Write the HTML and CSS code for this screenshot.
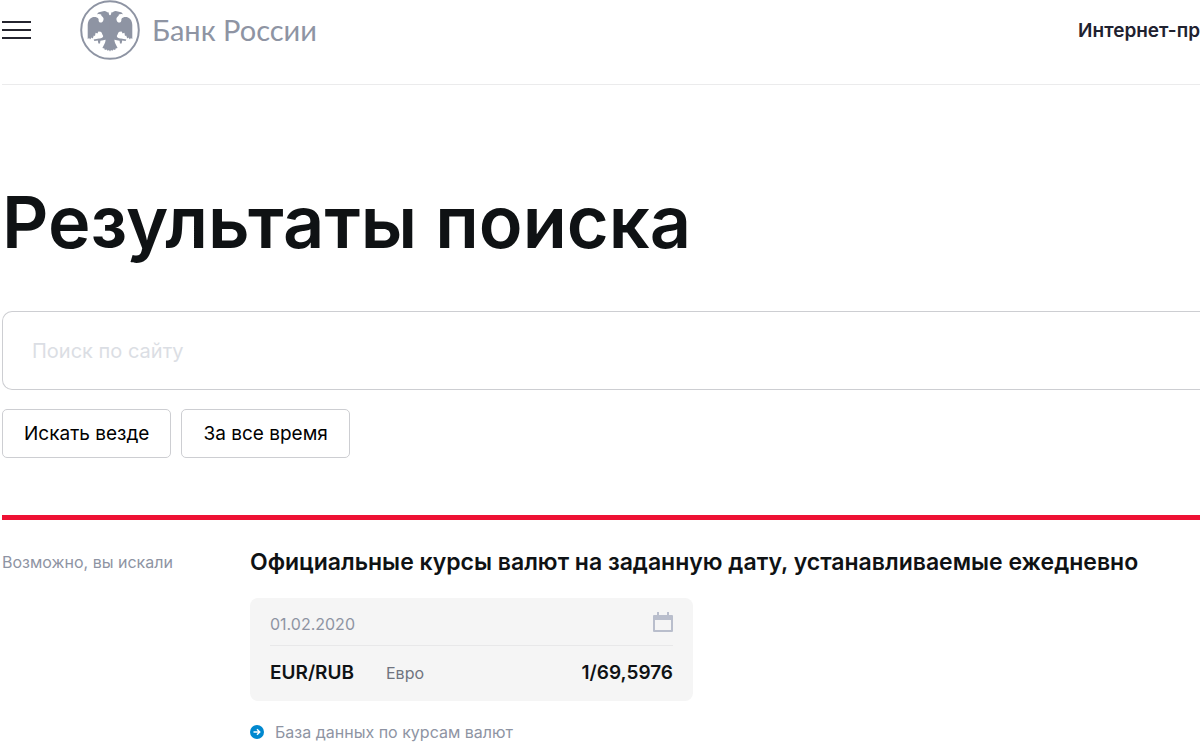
FILE: index.html
```html
<!DOCTYPE html>
<html lang="ru">
<head>
    <meta charset="UTF-8">
    <meta name="viewport" content="width=device-width, initial-scale=1.0">
    <title>Результаты поиска | Банк России</title>
    <link rel="stylesheet" href="styles.css">
</head>
<body>

    <header class="header">
        <button type="button" class="menu-button" aria-label="Меню">
            <span></span>
            <span></span>
            <span></span>
        </button>
        <a href="#" class="logo">
            <svg class="logo-icon" viewBox="0 0 60 60" aria-hidden="true">
                <circle cx="30" cy="30" r="28.8" fill="none" stroke="currentColor" stroke-width="2"/>
                <g id="eagle" fill="currentColor">
                    <path d="M30.2 15.5 C29 14.8 28.6 13.6 28.8 12.2 C27.4 13 26.6 11 24.4 11 C22.4 11 21.6 12 20 12 C18.4 12.2 17.4 13 17.3 14.4 C18.6 13.7 20 14 21.2 14.6 C20.8 16 22.8 16.5 23.4 18 C24 20 22.8 22.6 20.6 22.6 C18.4 22.4 18.6 20 18.6 19 C17.2 17 14.5 16.6 12 17.4 C9 18.6 7.7 21.6 7.7 25 L7.7 39 L9.2 38 L10 39.6 L11.6 37.4 L12.8 38.4 L13.8 35.4 L15 36 L15.6 32.8 L17.4 33.6 L18.4 31.4 L20.6 31.8 C22.4 32.6 22 34.6 23.2 36 C23.2 37.8 21 38.6 19 38.4 L13.6 39.6 L14.4 41 L17.8 40.6 L18.4 43.4 L20 43.6 L20.4 40.8 C22.8 40.6 24.4 39.6 25.6 39.8 C25.6 42.6 23.6 45.6 22.4 48 L24.4 48.6 L24.8 50 L26.6 49.4 L27.6 50.8 L29 50 L30.2 51.4 Z"/>
                </g>
                <use href="#eagle" transform="matrix(-1 0 0 1 60 0)"/>
            </svg>
            <span class="logo-text">Банк России</span>
        </a>
        <a href="#" class="header-link">Интернет-пр</a>
    </header>

    <main>
        <h1 class="title">Результаты поиска</h1>

        <form class="search">
            <input type="search" class="search-input" placeholder="Поиск по сайту" aria-label="Поиск по сайту">
            <div class="filters">
                <button type="button" class="filter">Искать везде</button>
                <button type="button" class="filter">За все время</button>
            </div>
        </form>

        <section class="results">
            <p class="results-label">Возможно, вы искали</p>
            <div class="results-content">
                <h2 class="results-title">Официальные курсы валют на заданную дату, устанавливаемые ежедневно</h2>

                <div class="card">
                    <div class="card-date">
                        <input type="text" id="date" class="date-input" value="01.02.2020" aria-label="Дата">
                        <label for="date" class="date-icon">
                            <svg viewBox="0 0 20 20" aria-hidden="true">
                                <path fill="currentColor" fill-rule="evenodd" d="M4 0h2v3h8V0h2v3h3a1 1 0 0 1 1 1v15a1 1 0 0 1-1 1H1a1 1 0 0 1-1-1V4a1 1 0 0 1 1-1h3zM2 8v10h16V8z"/>
                            </svg>
                        </label>
                    </div>
                    <div class="rate">
                        <strong class="rate-code">EUR/RUB</strong>
                        <span class="rate-name">Евро</span>
                        <strong class="rate-value">1/69,5976</strong>
                    </div>
                </div>

                <a href="#" class="more-link">
                    <svg class="more-icon" viewBox="0 0 14 14" aria-hidden="true">
                        <circle cx="7" cy="7" r="7" fill="#0088cf"/>
                        <path d="M3.5 7h6M7 4.2 9.8 7 7 9.8" fill="none" stroke="#fff" stroke-width="1.4"/>
                    </svg>
                    База данных по курсам валют
                </a>
            </div>
        </section>
    </main>

</body>
</html>
```
FILE: styles.css
```css
* {
    box-sizing: border-box;
}

body {
    font-family: Inter, "Open Sans", sans-serif;
    margin: 0;
    padding-left: 2px;
    background-color: #ffffff;
    color: #0f1214;
    overflow-x: hidden;
}

h1, h2, p {
    margin: 0;
}

a {
    text-decoration: none;
}

button, input {
    font-family: inherit;
}

/* Header */
.header {
    display: flex;
    align-items: flex-start;
    height: 85px;
    border-bottom: 1px solid #ebebec;
}

.menu-button {
    display: flex;
    flex-direction: column;
    gap: 6px;
    width: 29px;
    margin: 21px 49px 0 0;
    padding: 0;
    border: none;
    background: none;
    cursor: pointer;
}

.menu-button span {
    width: 100%;
    height: 2px;
    background-color: #24242e;
}

.logo {
    display: flex;
    align-items: center;
    gap: 12px;
    color: #8e94a3;
}

.logo-icon {
    width: 60px;
    height: 60px;
}

.logo-text {
    font-family: Lato, sans-serif;
    font-size: 29px;
    line-height: 58px;
}

.header-link {
    margin-left: auto;
    font-size: 19px;
    font-weight: 600;
    line-height: 62px;
    color: #1f2230;
    white-space: nowrap;
}

/* Search */
.title {
    padding: 91px 0 43px;
    font-size: 72px;
    font-weight: 600;
    line-height: 92px;
}

.search-input {
    display: block;
    width: 100%;
    height: 79px;
    padding: 0 29px;
    border: 1px solid #cdced2;
    border-right: none;
    border-radius: 10px 0 0 10px;
    background-color: #ffffff;
    font-size: 20px;
}

.search-input::placeholder {
    color: #dbdee4;
}

.filters {
    display: flex;
    gap: 10px;
    margin-top: 19px;
}

.filter {
    height: 49px;
    padding: 0 21px;
    border: 1px solid #cdced2;
    border-radius: 5px;
    background-color: #ffffff;
    color: #000000;
    font-size: 19px;
    cursor: pointer;
}

/* Results */
.results {
    display: flex;
    margin-top: 57px;
    padding-top: 26px;
    border-top: 5px solid #ee1133;
}

.results-label {
    flex: 0 0 248px;
    font-size: 16px;
    line-height: 32px;
    color: #8e94a3;
}

.results-content {
    flex: 1;
}

.results-title {
    font-size: 23px;
    font-weight: 600;
    line-height: 32px;
    white-space: nowrap;
}

.card {
    max-width: 443px;
    margin-top: 20px;
    padding: 0 20px;
    border-radius: 8px;
    background-color: #f5f5f5;
}

.card-date {
    display: flex;
    align-items: center;
    justify-content: space-between;
    height: 48px;
    border-bottom: 1px solid #e8e8e9;
}

.date-input {
    width: 160px;
    padding: 4px 0 0;
    border: none;
    background: none;
    font-size: 16px;
    color: #8e94a3;
}

.date-icon {
    width: 20px;
    height: 20px;
    color: #b9becc;
    cursor: pointer;
}

.date-icon svg {
    display: block;
}

.rate {
    display: flex;
    align-items: baseline;
    height: 55px;
    line-height: 54px;
}

.rate-code, .rate-value {
    font-size: 19px;
    font-weight: 600;
}

.rate-name {
    margin-left: 32px;
    font-size: 16px;
    color: #70747f;
}

.rate-value {
    margin-left: auto;
}

.more-link {
    display: inline-flex;
    align-items: center;
    gap: 11px;
    margin-top: 19px;
    font-size: 16px;
    line-height: 24px;
    color: #8e94a3;
}

.more-icon {
    width: 14px;
    height: 14px;
}
```
